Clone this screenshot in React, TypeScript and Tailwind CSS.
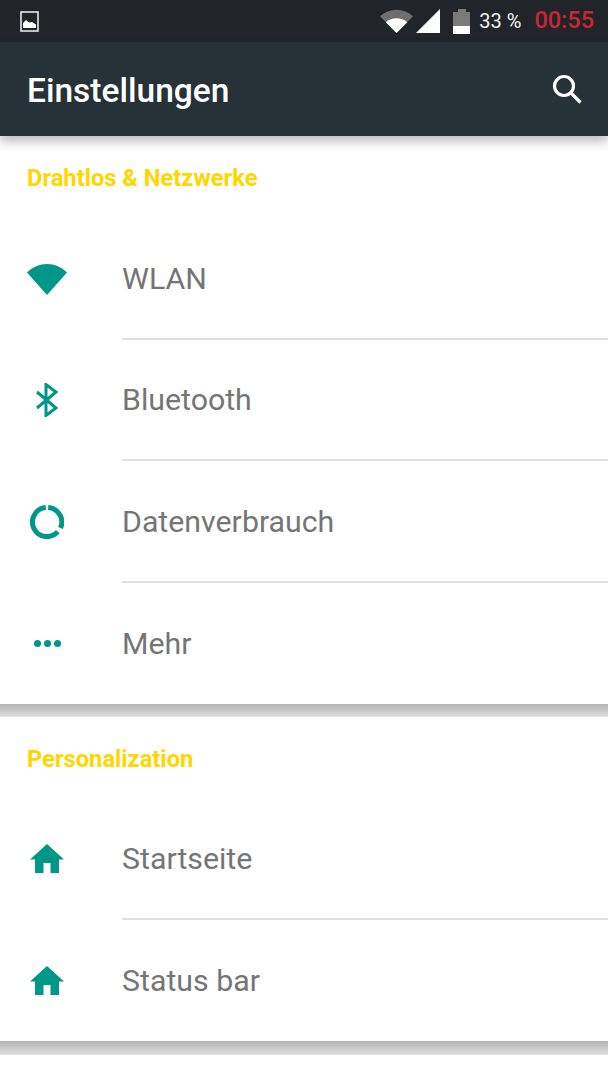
const font = "font-['Roboto',sans-serif]";

function WifiIcon({ className, back }: { className: string; back?: string }) {
  return (
    <svg viewBox="0 0 40 32" className={className} preserveAspectRatio="none">
      <path d="M20 32 L0 9.5 C5.5 4 12.5 1 20 1 C27.5 1 34.5 4 40 9.5 Z" fill={back ?? "currentColor"} />
      {back && <path d="M20 32 L7 17.5 C10.5 14.2 15 12.4 20 12.4 C25 12.4 29.5 14.2 33 17.5 Z" fill="currentColor" />}
    </svg>
  );
}

function BluetoothIcon() {
  return (
    <svg viewBox="0 0 24 34" className="h-[34px] w-6 text-[#009688]" fill="none" stroke="currentColor" strokeWidth="3">
      <path d="M2 9 L21 25 L11 32.5 V1.5 L21 9 L2 25" />
    </svg>
  );
}

function UsageIcon() {
  return (
    <svg viewBox="0 0 34 34" className="h-[34px] w-[34px] text-[#009688]" fill="none" stroke="currentColor" strokeWidth="5">
      <path d="M18.2 2.6 A14.5 14.5 0 0 1 30.5 23" />
      <path d="M27.8 26.7 A14.5 14.5 0 1 1 15.8 2.6" />
    </svg>
  );
}

function MoreIcon() {
  return (
    <div className="flex gap-[3px] text-[#009688]">
      <span className="h-[7px] w-[7px] rounded-full bg-current" />
      <span className="h-[7px] w-[7px] rounded-full bg-current" />
      <span className="h-[7px] w-[7px] rounded-full bg-current" />
    </div>
  );
}

function HomeIcon() {
  return (
    <svg viewBox="0 0 34 29" className="h-[29px] w-[34px] text-[#009688]" fill="currentColor">
      <path d="M17 0 L34 15.5 H29 V29 H20.5 V19 H13.5 V29 H5 V15.5 H0 Z" />
    </svg>
  );
}

function Row({ icon, label, last }: { icon: React.ReactNode; label: string; last?: boolean }) {
  return (
    <div className="flex h-[121.5px] items-stretch">
      <div className="flex w-[122px] shrink-0 items-center pl-[27px]">
        <div className="flex w-10 justify-center">{icon}</div>
      </div>
      <div className={`flex flex-1 items-center ${last ? "" : "border-b-2 border-[#e0e0e0]"}`}>
        <span className="pt-[2px] text-[30.3px] leading-none text-[#757575]">{label}</span>
      </div>
    </div>
  );
}

function SectionTitle({ children }: { children: React.ReactNode }) {
  return <div className="px-[27px] text-[23.7px] font-bold leading-none text-[#ffd600]">{children}</div>;
}

export default function App() {
  return (
    <div className={`${font} flex h-[1080px] w-[608px] flex-col overflow-hidden bg-white`}>
      {/* status bar */}
      <div className="flex h-[42px] items-center bg-[#212529] pl-[20px] pr-[14px] text-white">
        <svg viewBox="0 0 19 21" className="h-[21px] w-[19px]" fill="none">
          <rect x="1" y="1" width="17" height="19" stroke="#e8e8e8" strokeWidth="1.6" />
          <path d="M3 17 V12 L6 9 L9 11.5 L12 11 L16 13.5 V17 Z" fill="#fff" />
        </svg>
        <div className="ml-auto flex items-center">
          <WifiIcon className="h-6 w-[33px] text-white" back="#6e6e6e" />
          <svg viewBox="0 0 24 24" className="ml-[3px] h-6 w-6" fill="#fff">
            <path d="M24 0 V24 H0 Z" />
          </svg>
          <div className="ml-[13px] flex h-[25px] w-[17px] flex-col items-center">
            <div className="h-[3px] w-2 bg-[#7a7a7a]" />
            <div className="h-[14px] w-[17px] bg-[#7a7a7a]" />
            <div className="h-2 w-[17px] bg-white" />
          </div>
          <span className="ml-[9px] text-[20px] leading-none text-[#f2f2f2]">33 %</span>
          <span className="ml-[13px] text-[23.5px] font-medium leading-none text-[#c62833]">00:55</span>
        </div>
      </div>

      {/* app bar */}
      <div className="relative z-10 flex h-[94px] items-center justify-between bg-[#263238] pl-[27px] pr-[26px] shadow-[0_6px_10px_rgba(0,0,0,0.25)]">
        <span className="pt-[3px] text-[33.5px] font-medium leading-none text-white">Einstellungen</span>
        <svg viewBox="0 0 30 30" className="h-[30px] w-[30px]" fill="none" stroke="#fff" strokeWidth="3.2">
          <circle cx="12" cy="12" r="9.5" />
          <path d="M19 19 L28.5 28.5" />
        </svg>
      </div>

      {/* Drahtlos & Netzwerke */}
      <div className="flex h-[82px] flex-col pt-[31px]">
        <SectionTitle>Drahtlos &amp; Netzwerke</SectionTitle>
      </div>
      <Row icon={<WifiIcon className="h-[32px] w-10 text-[#009688]" />} label="WLAN" />
      <Row icon={<BluetoothIcon />} label="Bluetooth" />
      <Row icon={<UsageIcon />} label="Datenverbrauch" />
      <Row icon={<MoreIcon />} label="Mehr" last />
      <div className="h-[13px] border-b border-[#e4e4e4] bg-gradient-to-b from-[#b4b4b4] to-[#dcdcdc]" />

      {/* Personalization */}
      <div className="flex h-[81px] flex-col pt-[31px]">
        <SectionTitle>Personalization</SectionTitle>
      </div>
      <Row icon={<HomeIcon />} label="Startseite" />
      <Row icon={<HomeIcon />} label="Status bar" last />
      <div className="h-[14px] border-b border-[#e4e4e4] bg-gradient-to-b from-[#b4b4b4] to-[#dcdcdc]" />
    </div>
  );
}
